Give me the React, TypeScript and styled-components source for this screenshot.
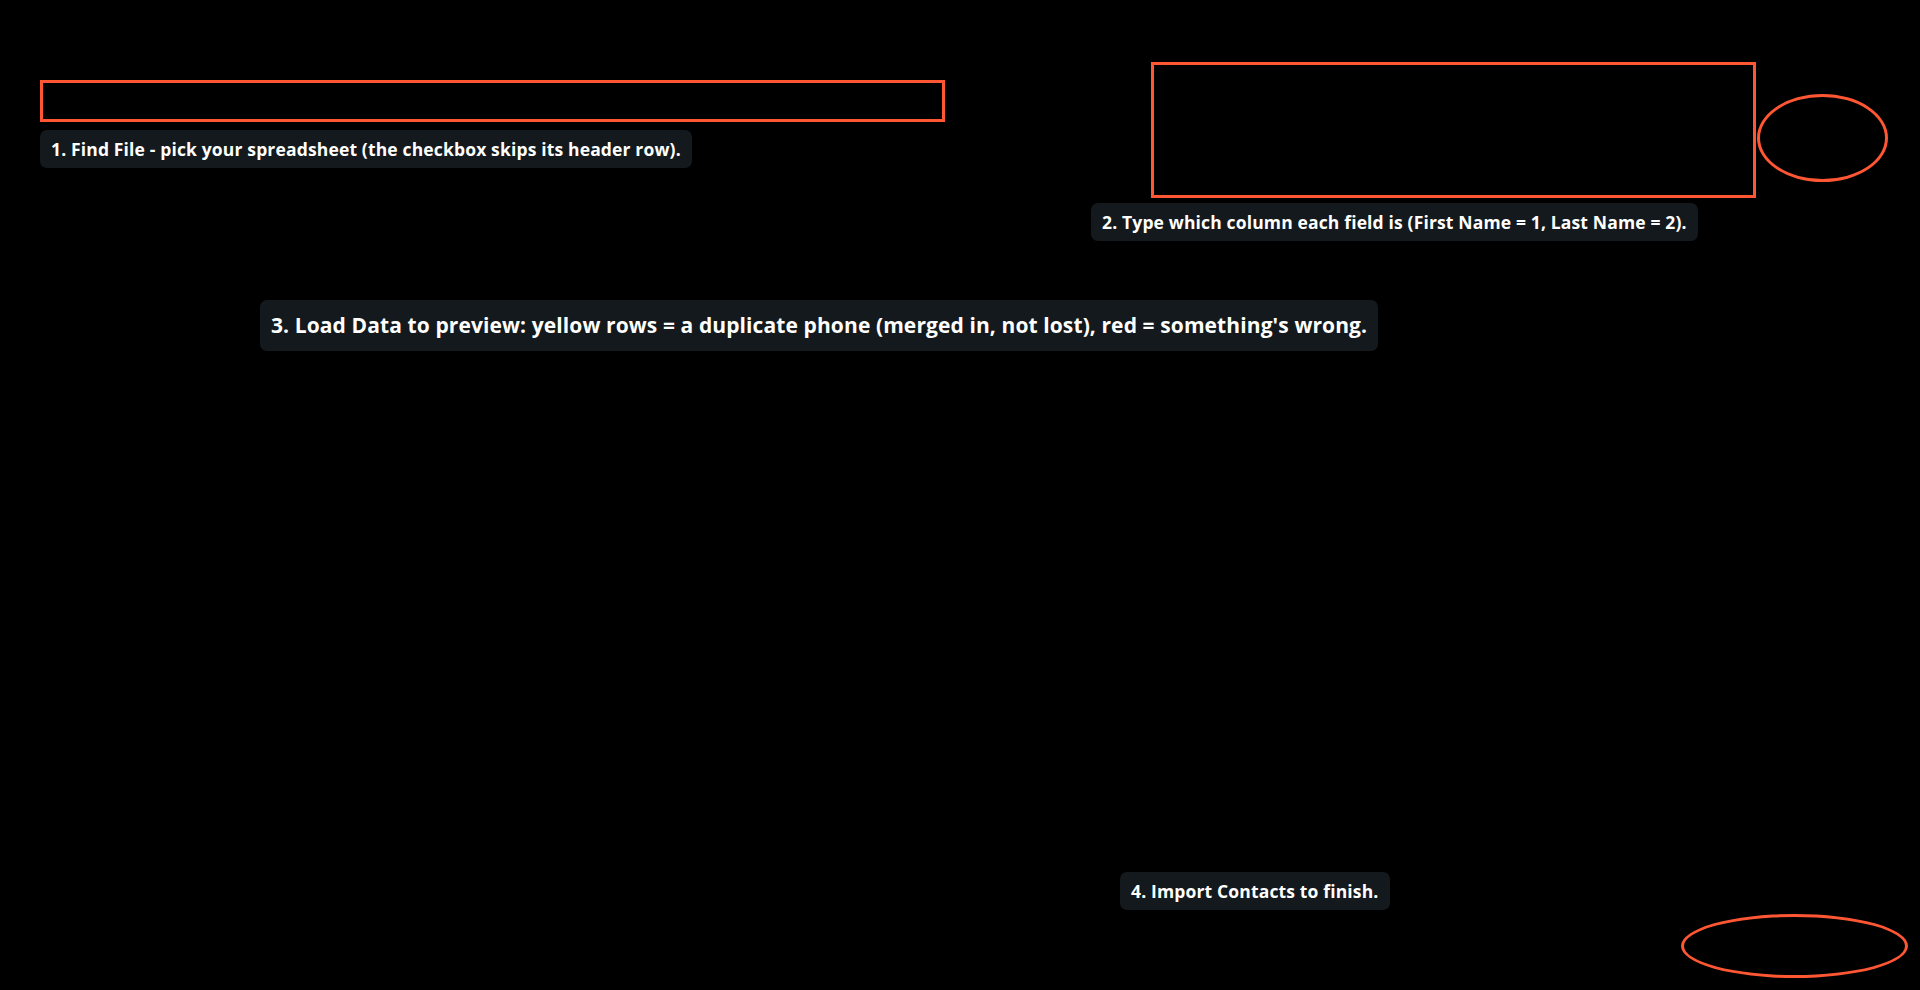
import React from 'react';
import styled, { createGlobalStyle } from 'styled-components';

const GlobalStyle = createGlobalStyle`
  html, body {
    margin: 0;
    padding: 0;
    background: #000;
  }
  body {
    font-family: 'Open Sans', 'Noto Sans', sans-serif;
  }
`;

const ACCENT = '#ff5733';

// Coach-mark overlay: a free canvas; each step group sits over the control it explains.
const Stage = styled.div`
  position: relative;
  width: 1920px;
  height: 990px;
  background: #000;
  overflow: hidden;
`;

const Step = styled.div<{ $x: number; $y: number; $gap?: number }>`
  position: absolute;
  left: ${p => p.$x}px;
  top: ${p => p.$y}px;
  display: flex;
  flex-direction: column;
  align-items: flex-start;
  gap: ${p => p.$gap ?? 8}px;
`;

const MarkRow = styled.div`
  display: flex;
  align-items: flex-end;
  gap: 1px;
  padding-left: 60px;
`;

const Frame = styled.div<{ $w: number; $h: number }>`
  box-sizing: border-box;
  width: ${p => p.$w}px;
  height: ${p => p.$h}px;
  border: 3px solid ${ACCENT};
`;

const Ring = styled.div<{ $w: number; $h: number; $lift?: number; $indent?: number }>`
  box-sizing: border-box;
  width: ${p => p.$w}px;
  height: ${p => p.$h}px;
  margin-bottom: ${p => p.$lift ?? 0}px;
  margin-left: ${p => p.$indent ?? 0}px;
  border: 3px solid ${ACCENT};
  border-radius: 50%;
`;

const Hint = styled.div<{ $large?: boolean }>`
  box-sizing: border-box;
  white-space: nowrap;
  background: #13191c;
  color: #fff;
  font-weight: 700;
  font-size: ${p => (p.$large ? '21px' : '17.5px')};
  line-height: ${p => (p.$large ? '27px' : '22px')};
  letter-spacing: ${p => (p.$large ? '0.1px' : '0.15px')};
  padding: ${p => (p.$large ? '12px 11px' : '8px 11px')};
  border-radius: 7px;
`;

const App: React.FC = () => {
  return (
    <>
      <GlobalStyle />
      <Stage>
        <Step $x={40} $y={80}>
          <Frame $w={905} $h={42} />
          <Hint>1. Find File - pick your spreadsheet (the checkbox skips its header row).</Hint>
        </Step>

        <Step $x={1091} $y={62} $gap={5}>
          <MarkRow>
            <Frame $w={605} $h={136} />
            <Ring $w={131} $h={88} $lift={16} />
          </MarkRow>
          <Hint>2. Type which column each field is (First Name = 1, Last Name = 2).</Hint>
        </Step>

        <Step $x={260} $y={300}>
          <Hint $large>
            3. Load Data to preview: yellow rows = a duplicate phone (merged in, not lost), red = something's wrong.
          </Hint>
        </Step>

        <Step $x={1120} $y={872} $gap={4}>
          <Hint>4. Import Contacts to finish.</Hint>
          <Ring $w={227} $h={64} $indent={561} />
        </Step>
      </Stage>
    </>
  );
};

export default App;
